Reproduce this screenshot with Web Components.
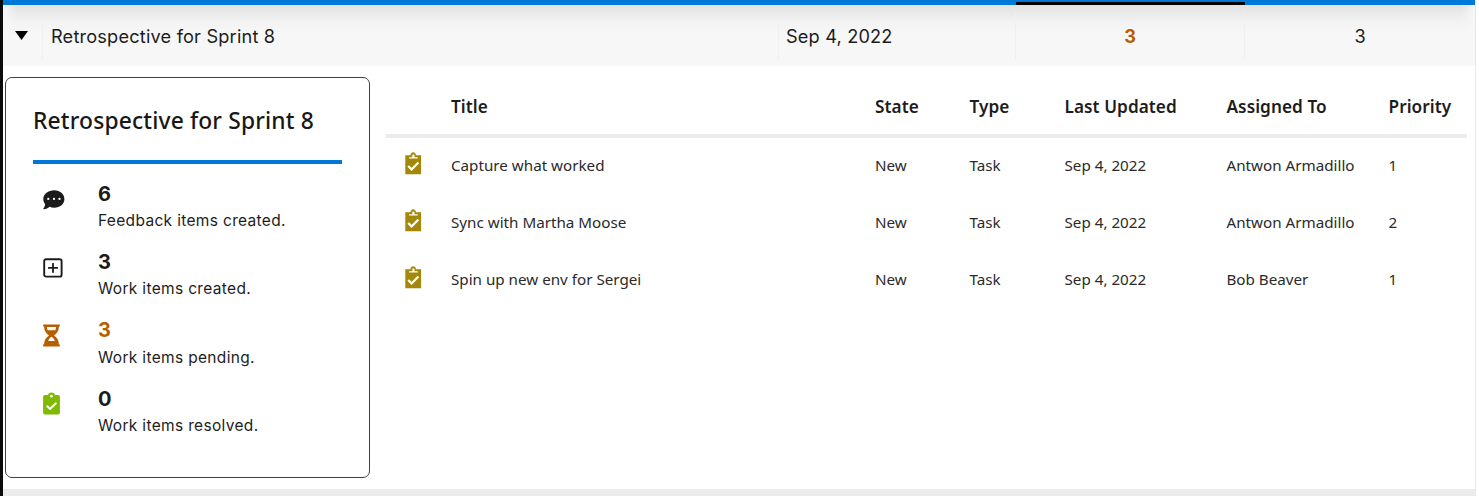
<!DOCTYPE html>
<html lang="en">
<head>
<meta charset="utf-8">
<title>Retrospective for Sprint 8</title>
<style>
html,body{margin:0;height:100%;background:#fff}
body{overflow:hidden;color:#1d1d1d;font-family:Inter,"Liberation Sans",sans-serif}
</style>
</head>
<body>
<retro-page></retro-page>
<script>
const icons = {
  chat: '<svg width="22" height="20" viewBox="0 0 22 20"><path fill="#1b1b1b" fill-rule="evenodd" d="M11.200.3C17 .3 21.400 4 21.400 9s-4.400 8.700-10.200 8.700c-1.700 0-3.300-.3-4.700-.9C5 18.300 2.700 19.400.7 19.300c-.4 0-.5-.4-.3-.7 1-1.100 1.600-2.700 1.700-4.500C.9 12.700.3 11 .3 9 .3 4 5.400.3 11.200.3Z"/><g fill="#fff"><circle cx="5.300" cy="8.900" r="1.150"/><circle cx="11" cy="8.900" r="1.150"/><circle cx="16.500" cy="8.900" r="1.150"/></g></svg>',
  plus: '<svg width="20" height="20" viewBox="0 0 20 20" fill="none" stroke="#1b1b1b"><rect x="1.200" y="1.200" width="17.400" height="17.400" rx="1.900" stroke-width="1.900"/><path stroke-width="1.800" stroke-linecap="round" d="M10 5.700v8.400M5.800 9.900h8.400"/></svg>',
  hourglass: '<svg width="17" height="23" viewBox="0 0 17 23"><path fill="#b85e00" fill-rule="evenodd" d="M1 .5h15c.8 0 .9.4.9 1s-.2 1-1 1.100c0 4.300-1.900 6.900-4.900 8.900 3 2 4.900 4.700 4.900 8.800.8.1 1 .5 1 1.100s-.2 1-1 1H1c-.7 0-.9-.4-.9-1s.2-1 1-1.100C1.100 16.200 3 13.500 6 11.500 3 9.500 1.100 6.900 1.100 2.600.3 2.500.1 2.100.1 1.500s.2-1 .9-1ZM3.900 3.100c.1 1.100.3 2.100.7 3.100h7.800c.4-1 .6-2 .7-3.100ZM8.500 12.800c-1.500 1-2.700 2.500-3.400 4.300h6.800c-.7-1.800-1.900-3.300-3.400-4.300Z"/></svg>',
  done: '<svg width="17" height="23" viewBox="0 0 17 23"><path fill="#7fba00" fill-rule="evenodd" d="M2 2.900h3C5.400 1.200 6.800.4 8.500.4s3.100.8 3.500 2.500h3c1.200 0 1.900.7 1.900 1.900v15.800c0 1.200-.7 1.900-1.900 1.900H2c-1.200 0-1.900-.7-1.900-1.900V4.800c0-1.200.7-1.900 1.900-1.900Zm6.500-.1a1.400 1.400 0 1 0 0 2.800 1.400 1.400 0 0 0 0-2.800Z"/><path fill="none" stroke="#fff" stroke-width="2" stroke-linecap="round" stroke-linejoin="round" d="m4.300 14.200 2.600 2.700 5.900-5.500"/></svg>',
  task: '<svg width="17" height="23" viewBox="0 0 17 23"><path fill="#a4880a" fill-rule="evenodd" d="M.3 3.200h4.500c.7 0 .7-.4.9-1C6.200 1 7 .3 8.200.3s2 .7 2.500 1.900c.2.600.2 1 .9 1h4.500v19H.3ZM4.100 6.500h8.700V5.200H9.500V3.500c0-.8-.5-1.100-1.100-1.100s-1.100.3-1.100 1.100v1.700H4.100Z"/><path fill="none" stroke="#fff" stroke-width="2.200" d="m3.200 14 3.400 3.400 6.800-6.900"/></svg>',
  caret: '<svg width="13" height="9" viewBox="0 0 13 9"><path d="M0 0h13L6.500 9Z"/></svg>'
};
function define(name, css, html) {
  customElements.define(name, class extends HTMLElement {
    constructor() {
      super();
      const template = document.createElement('template');
      const markup = typeof html === 'function' ? html(this) : html;
      template.innerHTML = `<style>*{box-sizing:border-box}${css}</style>${markup}`;
      this.attachShadow({mode:'open'}).append(template.content.cloneNode(true));
    }
  });
}
define('ui-icon', ':host{display:block;line-height:0}svg{display:block}', e => icons[e.getAttribute('name')]);

define('summary-row', `
:host{display:block;background:#f7f7f7;border-top:5px solid #0078d7;height:66px}
.row{display:grid;grid-template-columns:40px 735.500px 237.500px 228.500px 1fr;height:61px;align-items:center;font-size:18.200px;letter-spacing:.18px;
 background:linear-gradient(90deg,#f7f7f7 0,#f7f7f700 14px,#f7f7f700 calc(100% - 14px),#f7f7f7 100%),linear-gradient(#e2e2e2 0,#e9e9e9 7px,#f0f0f0 14px,#f5f5f5 22px,#f7f7f7 31px)}
.row>*{height:47px;margin-top:1px;border-right:1px solid #f0f0f0;display:flex;align-items:center;padding-left:8px}
.row>.date{padding-left:7.400px}
.row>:first-child{padding:0 0 1px 12px}
.row>:last-child{border:0}
.row>.num{justify-content:center;padding:0 0 0 1px}
.pending{color:#b85e00;font-weight:700;position:relative}
.pending::before{content:"";position:absolute;height:3px;left:0;right:-1px;top:-11px;background:#000}
`, `<div class="row"><span><ui-icon name="caret"></ui-icon></span><span><slot name="title"></slot></span><span class="date"><slot name="date"></slot></span><span class="num pending"><slot name="pending"></slot></span><span class="num"><slot name="resolved"></slot></span></div>`);

define('stat-item', `
:host{display:grid;grid-template-columns:55px 1fr;height:68.300px;padding-left:10px}
.icon{padding-top:var(--icon-top,8px)}
b{display:block;font-size:20px;line-height:24px;font-weight:650;margin-top:var(--count-top,0px);color:var(--count,#1b1b1b)}
span{display:block;font-size:15.500px;line-height:20px;margin-top:calc(5px - var(--count-top,0px));letter-spacing:.33px;white-space:nowrap}
`, e => `<div class="icon"><ui-icon name="${e.getAttribute('icon')}"></ui-icon></div><div><b>${e.getAttribute('count')}</b><span><slot></slot></span></div>`);

define('summary-card', `
:host{display:block;width:365px;height:401px;border:1px solid #404040;border-radius:7px;padding:25px 27px 0;flex:none}
h2{font:500 22.800px/35px "Noto Sans","Open Sans",sans-serif;padding-bottom:1px;margin:0;white-space:nowrap;letter-spacing:.16px;color:#181818}
.rule{height:3.600px;background:#0078d7;margin:21px 0 18.500px}
`, `<h2><slot name="heading"></slot></h2><div class="rule"></div><slot></slot>`);

const columns = 'display:grid;grid-template-columns:65px 424px 94.500px 95px 162px 162px 1fr;align-items:center;white-space:nowrap;';
define('work-head', `:host{${columns}height:61px;padding-top:2px;box-sizing:border-box;border-bottom:4px solid #ebebeb;font-size:17.200px;font-weight:600;letter-spacing:.06px}`,
 `<span></span><span>Title</span><span>State</span><span>Type</span><span>Last Updated</span><span>Assigned To</span><span>Priority</span>`);
define('work-item', `:host{${columns}height:57px;font-size:15.200px;letter-spacing:0;color:#2a2a2a}span{margin-top:-4px}ui-icon{margin:-7px 0 0 18.500px}`,
 e => `<ui-icon name="task"></ui-icon><span><slot></slot></span><span>New</span><span>Task</span><span>Sep 4, 2022</span><span>${e.getAttribute('owner')}</span><span>${e.getAttribute('priority')}</span>`);
define('work-table', ':host{display:block;width:1081px;font-family:"Noto Sans","Open Sans",sans-serif}', '<slot></slot>');

define('retro-page', `
:host{display:flex;flex-direction:column;width:1479px;height:496px;border-left:3px solid #0b0b0b;box-sizing:border-box}
main{width:1473px;height:496px;border-right:1px solid #e8e8e8;display:flex;flex-direction:column}
summary-row{flex:none}
.body{display:flex;gap:16px;padding:11px 0 0 2px;flex:1}
footer{height:7px;background:#ebebeb;flex:none}
`, `<main><summary-row><span slot="title">Retrospective for Sprint 8</span><span slot="date">Sep 4, 2022</span><span slot="pending">3</span><span slot="resolved">3</span></summary-row>
<div class="body"><summary-card><span slot="heading">Retrospective for Sprint 8</span>
<stat-item icon="chat" count="6">Feedback items created.</stat-item>
<stat-item icon="plus" count="3">Work items created.</stat-item>
<stat-item icon="hourglass" count="3" style="--count:#b85e00;--icon-top:5px;--count-top:-1px">Work items pending.</stat-item>
<stat-item icon="done" count="0" style="--icon-top:5px">Work items resolved.</stat-item></summary-card>
<work-table><work-head></work-head>
<work-item owner="Antwon Armadillo" priority="1">Capture what worked</work-item>
<work-item owner="Antwon Armadillo" priority="2">Sync with Martha Moose</work-item>
<work-item owner="Bob Beaver" priority="1">Spin up new env for Sergei</work-item></work-table></div><footer></footer></main>`);
</script>
</body>
</html>
